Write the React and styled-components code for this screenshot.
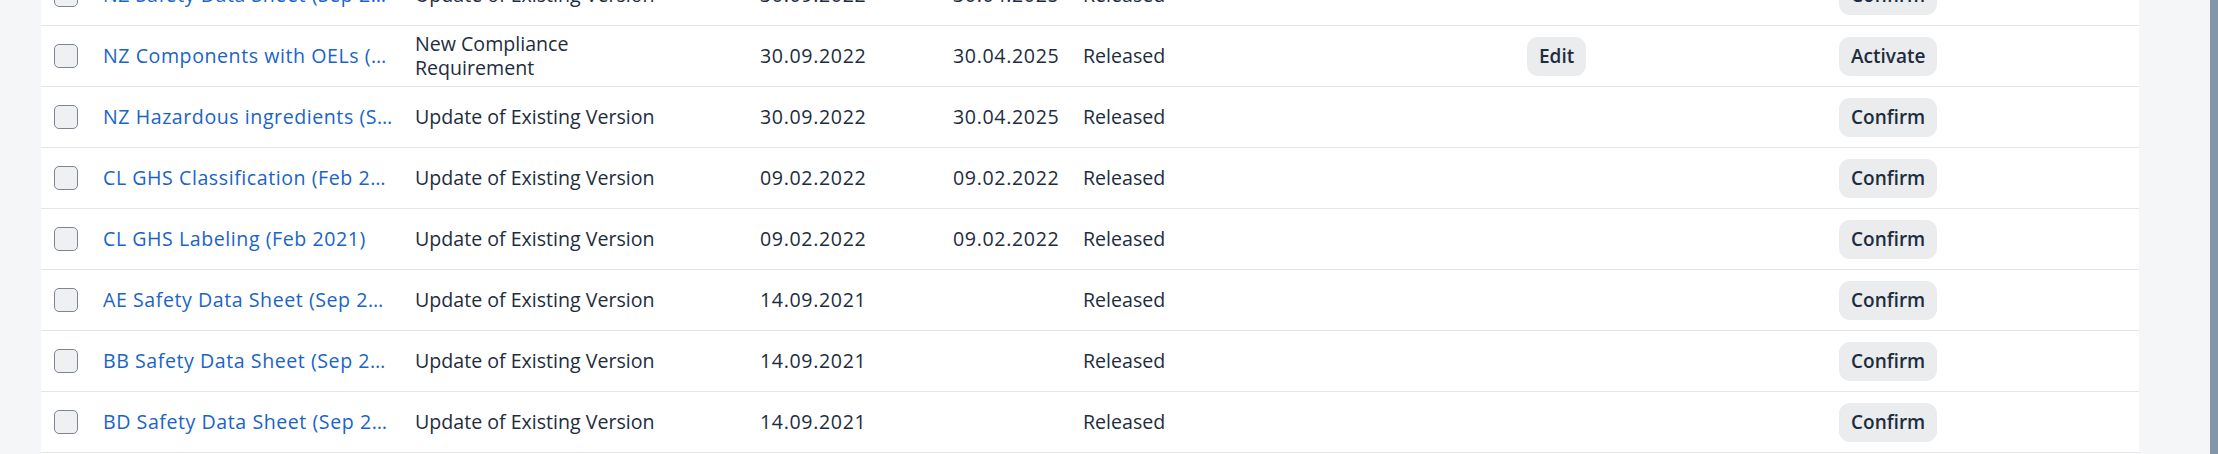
import React from "react";
import styled, { createGlobalStyle } from "styled-components";

const GlobalStyle = createGlobalStyle`
  html, body {
    margin: 0;
    padding: 0;
    background: #f5f6f7;
    font-family: "Open Sans", "Noto Sans", Arial, sans-serif;
  }
`;

const Page = styled.div`
  display: flex;
  height: 454px;
  overflow: hidden;
`;

const Content = styled.div`
  flex: 1;
  padding: 0 71px 0 41px;
  background: #f5f6f7;
`;

const Scrollbar = styled.div`
  width: 8px;
  background: #8495a7;
`;

const Table = styled.div`
  background: #ffffff;
  margin-top: -35px;
`;

const Row = styled.div`
  display: grid;
  grid-template-columns: 49px 312px 345px 193px 130px 444px 312px 1fr;
  align-items: center;
  height: 60px;
  padding-left: 13px;
  border-bottom: 1px solid #e5e5e5;
  font-size: 19.6px;
  line-height: 1.22;
  color: #1d2d3e;
`;

const Cell = styled.div`
  min-width: 0;
`;

const DateCell = styled.div`
  min-width: 0;
  letter-spacing: 0.65px;
`;

const Checkbox = styled.span`
  display: block;
  width: 22px;
  height: 22px;
  border: 1.3px solid #7c8591;
  border-radius: 5px;
  background: #eef0f2;
`;

const NameLink = styled.a`
  display: block;
  padding-right: 22px;
  color: #1a64c7;
  text-decoration: none;
  letter-spacing: 0.55px;
  white-space: nowrap;
  overflow: hidden;
  text-overflow: ellipsis;
`;

const TypeText = styled.div`
  max-width: 250px;
`;

const Button = styled.button`
  height: 39px;
  padding: 0 12px;
  border: none;
  border-radius: 11px;
  background: #eaecee;
  color: #1d2d3e;
  font-family: "Open Sans", "Noto Sans", Arial, sans-serif;
  font-size: 19px;
  font-weight: 600;
  cursor: pointer;
`;

const rows = [
  { name: "NZ Safety Data Sheet (Sep 2022)", type: "Update of Existing Version", from: "30.09.2022", to: "30.04.2025", status: "Released", action: "Confirm" },
  { name: "NZ Components with OELs (Sep 2022)", type: "New Compliance Requirement", from: "30.09.2022", to: "30.04.2025", status: "Released", edit: true, action: "Activate" },
  { name: "NZ Hazardous ingredients (Sep 2022)", type: "Update of Existing Version", from: "30.09.2022", to: "30.04.2025", status: "Released", action: "Confirm" },
  { name: "CL GHS Classification (Feb 2021)", type: "Update of Existing Version", from: "09.02.2022", to: "09.02.2022", status: "Released", action: "Confirm" },
  { name: "CL GHS Labeling (Feb 2021)", type: "Update of Existing Version", from: "09.02.2022", to: "09.02.2022", status: "Released", action: "Confirm" },
  { name: "AE Safety Data Sheet (Sep 2021)", type: "Update of Existing Version", from: "14.09.2021", to: "", status: "Released", action: "Confirm" },
  { name: "BB Safety Data Sheet (Sep 2021)", type: "Update of Existing Version", from: "14.09.2021", to: "", status: "Released", action: "Confirm" },
  { name: "BD Safety Data Sheet (Sep 2021)", type: "Update of Existing Version", from: "14.09.2021", to: "", status: "Released", action: "Confirm" },
  { name: "BH Safety Data Sheet (Sep 2021)", type: "Update of Existing Version", from: "14.09.2021", to: "", status: "Released", action: "Confirm" },
];

export default function App() {
  return (
    <>
      <GlobalStyle />
      <Page>
        <Content>
          <Table>
            {rows.map((r, i) => (
              <Row key={i}>
                <Cell>
                  <Checkbox />
                </Cell>
                <Cell>
                  <NameLink href="#">{r.name}</NameLink>
                </Cell>
                <Cell>
                  <TypeText>{r.type}</TypeText>
                </Cell>
                <DateCell>{r.from}</DateCell>
                <DateCell>{r.to}</DateCell>
                <Cell>{r.status}</Cell>
                <Cell>{r.edit && <Button>Edit</Button>}</Cell>
                <Cell>
                  <Button>{r.action}</Button>
                </Cell>
              </Row>
            ))}
          </Table>
        </Content>
        <Scrollbar />
      </Page>
    </>
  );
}
